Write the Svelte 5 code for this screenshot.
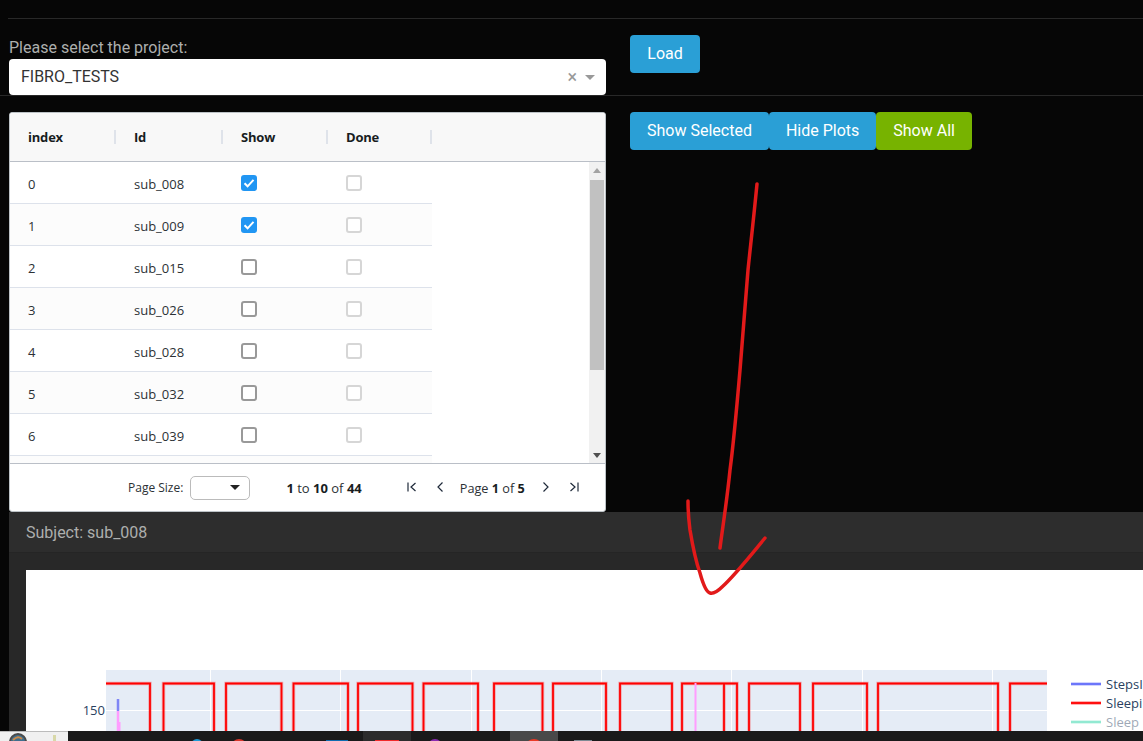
<script>
  const rows = [
    { i: 0, id: 'sub_008', show: true },
    { i: 1, id: 'sub_009', show: true },
    { i: 2, id: 'sub_015', show: false },
    { i: 3, id: 'sub_026', show: false },
    { i: 4, id: 'sub_028', show: false },
    { i: 5, id: 'sub_032', show: false },
    { i: 6, id: 'sub_039', show: false }
  ];
  const pulses = [[163.5,214],[226,281.5],[293.5,348],[358,412.5],[423.5,478],[494,542.5],[553,606],[620,672],[682,737],[749,800],[813,867],[878,998]];
  const trace = 'M106 683.5H150V741 ' + pulses.map(([a, b]) => `M${a} 741V683.5H${b}V741`).join(' ') + ' M1010 741V683.5H1047 M724 683.5V741';
  const grid = [210.5, 340.5, 471.5, 601.5, 731.5, 862.5, 992.5];
  const legend = [
    { y: 684, c: '#636efa', t: 'StepsI', o: 1 },
    { y: 703, c: '#ff0000', t: 'Sleepi', o: 1 },
    { y: 722, c: '#00cc96', t: 'Sleep', o: 0.45 }
  ];
</script>

<div class="page">
  <div class="rule-top"></div>
  <section class="load-row">
    <div class="col-left">
      <label class="label" for="project">Please select the project:</label>
      <div class="select" id="project">
        <span>FIBRO_TESTS</span>
        <span class="clear">×</span>
        <span class="caret"></span>
      </div>
    </div>
    <button class="btn load">Load</button>
  </section>

  <section class="table-row">
    <div class="card">
      <div class="thead">
        <div class="th">index</div>
        <div class="th">Id</div>
        <div class="th">Show</div>
        <div class="th">Done</div>
      </div>
      <div class="tbody">
        <div class="rows">
          {#each rows as r}
            <div class="tr" class:alt={r.i % 2 === 1}>
              <div class="td">{r.i}</div>
              <div class="td">{r.id}</div>
              <div class="td box">
                {#if r.show}
                  <span class="cb on">
                    <svg width="16" height="16" viewBox="0 0 16 16"><path d="M3.5 8.2 6.6 11.3 12.5 4.8" fill="none" stroke="#fff" stroke-width="2"/></svg>
                  </span>
                {:else}
                  <span class="cb"></span>
                {/if}
              </div>
              <div class="td box"><span class="cb off"></span></div>
            </div>
          {/each}
          <div class="tr alt"></div>
        </div>
        <div class="scrollbar">
          <span class="arrow up"></span>
          <div class="thumb"></div>
          <span class="arrow down"></span>
        </div>
      </div>
      <div class="tfoot">
        <span class="ps-label">Page Size:</span>
        <span class="ps"><span class="ps-caret"></span></span>
        <span class="count"><b>1</b> to <b>10</b> of <b>44</b></span>
        <svg class="pi first" width="10" height="10" viewBox="0 0 10 10"><path d="M1 .5V9.500M8.500 1 4 5 8.500 9" fill="none" stroke="#1f2a3a" stroke-width="1.200"/></svg>
        <svg class="pi prev" width="8" height="10" viewBox="0 0 8 10"><path d="M6.500 .5 2 5 6.500 9.500" fill="none" stroke="#1f2a3a" stroke-width="1.200"/></svg>
        <span class="pg">Page <b>1</b> of <b>5</b></span>
        <svg class="pi next" width="8" height="10" viewBox="0 0 8 10"><path d="M1.500 .5 6 5 1.500 9.500" fill="none" stroke="#1f2a3a" stroke-width="1.200"/></svg>
        <svg class="pi last" width="10" height="10" viewBox="0 0 10 10"><path d="M1.500 1 6 5 1.500 9M9 .5V9.500" fill="none" stroke="#1f2a3a" stroke-width="1.200"/></svg>
      </div>
    </div>
    <div class="actions">
      <button class="btn">Show Selected</button>
      <button class="btn">Hide Plots</button>
      <button class="btn green">Show All</button>
    </div>
  </section>

  <section class="panel">
    <div class="panel-head">Subject: sub_008</div>
    <div class="panel-body">
      <svg class="plot" viewBox="26 570 1117 171" width="1117" height="171">
        <rect x="106" y="670" width="941" height="71" fill="#e5ecf6" />
        {#each grid as x}
          <line x1={x} x2={x} y1="670" y2="741" stroke="#fff" />
        {/each}
        <line x1="106" x2="1047" y1="710.500" y2="710.500" stroke="#fff" />
        <path d={trace} fill="none" stroke="#ff0000" stroke-opacity=".28" stroke-width="3.500" />
        <path d={trace} fill="none" stroke="#ff0000" stroke-width="1.800" />
        <path d="M118 699V711" stroke="#7f86f5" stroke-width="2.500" />
        <path d="M118 711V741" stroke="#ff9dff" stroke-width="2.500" />
        <path d="M119.500 722V741" stroke="#ff9dff" stroke-width="2" />
        <path d="M695.500 683V741" stroke="#ff9dff" stroke-width="2" />
        <text class="tick" x="105" y="715" text-anchor="end">150</text>
        {#each legend as l}
          <g opacity={l.o}>
            <line x1="1071" x2="1101" y1={l.y} y2={l.y} stroke={l.c} stroke-opacity=".4" stroke-width="3.500" />
            <line x1="1071" x2="1101" y1={l.y} y2={l.y} stroke={l.c} stroke-width="1.800" />
            <text class="leg" x="1106" y={l.y + 5}>{l.t}</text>
          </g>
        {/each}
      </svg>
    </div>
  </section>

  <svg class="ink" width="1143" height="741" viewBox="0 0 1143 741">
    <path d="M757 184C753 225 750 250 748 270C745 305 743 335 740 370C737 405 734 440 730 470C727 500 723 525 720 548" />
    <path d="M688 501C688 515 689 522 690 530C693 548 696 562 700 573C703 584 706 592 710 593C714 594 718 591 722 587C736 574 750 556 765 538" />
  </svg>

  <footer class="taskbar">
    <div class="tab-chip">
      <svg width="20" height="10" viewBox="0 0 20 10"><circle cx="10" cy="10" r="8" fill="#3f6f8f" stroke="#4a4a4a" stroke-width="2"/><path d="M5 8Q10 3 14 7" fill="none" stroke="#c98a4a" stroke-width="2"/></svg>
      <span class="chip-tip"></span>
    </div>
    <div class="tb-slot s1"></div>
    <div class="tb-slot s2"></div>
    <div class="tb-slot s3"></div>
    <div class="tb-slot s4"></div>
    <div class="tb-slot s5"></div>
    <div class="tb-hl h1"></div>
    <div class="tb-hl h2"></div>
    <div class="tb-slot s6"></div>
    <div class="tb-slot s7"></div>
  </footer>
</div>

<style>
  :global(body) {
    margin: 0;
    background: #060606;
    overflow: hidden;
  }
  .page {
    position: relative;
    width: 1143px;
    height: 741px;
    overflow: hidden;
    background: #060606;
    font-family: Roboto, sans-serif;
    color: #adafae;
  }
  .rule-top {
    height: 1px;
    margin: 18px 0 0 8px;
    background: #282828;
  }
  .load-row {
    display: flex;
    align-items: flex-start;
    height: 76px;
    border-bottom: 1px solid #282828;
  }
  .col-left {
    width: 597px;
    margin-left: 9px;
    padding-top: 18px;
    position: relative;
  }
  .label {
    display: block;
    font-size: 16px;
    line-height: 22px;
    color: #adafae;
  }
  .select {
    display: flex;
    align-items: center;
    box-sizing: border-box;
    height: 36px;
    padding: 0 11px 1px 12px;
    background: #fff;
    border-radius: 4px;
    font-size: 16px;
    letter-spacing: -0.02px;
    color: #333;
    position: relative;
    z-index: 1;
  }
  .select span:first-child {
    flex: 1;
  }
  .clear {
    color: #999;
    font-size: 18px;
    line-height: 1;
    margin-right: 8px;
  }
  .caret {
    width: 0;
    height: 0;
    border-left: 5px solid transparent;
    border-right: 5px solid transparent;
    border-top: 5px solid #999;
    margin-top: 2px;
  }
  .btn {
    font-family: Roboto, sans-serif;
    font-size: 16px;
    line-height: 24px;
    color: #fff;
    background: #2a9fd6;
    border: 0;
    border-radius: 4px;
    padding: 7px 17px;
    height: 38px;
    white-space: nowrap;
  }
  .btn.green {
    background: #77b300;
  }
  .load {
    margin: 16px 0 0 24px;
    width: 70px;
    padding: 0;
  }
  .table-row {
    display: flex;
    align-items: flex-start;
    margin-top: 16px;
  }
  .card {
    box-sizing: border-box;
    width: 597px;
    height: 400px;
    margin-left: 9px;
    background: #fff;
    border: 1px solid #bdc3c7;
    border-radius: 3px;
    display: flex;
    flex-direction: column;
    font-family: "Open Sans", sans-serif;
    font-size: 13px;
    color: #181d1f;
    overflow: hidden;
  }
  .thead {
    display: grid;
    grid-template-columns: 106px 107px 105px 104px;
    height: 48px;
    flex: none;
    background: #f8f8f8;
    border-bottom: 1px solid #babfc7;
  }
  .th {
    display: flex;
    align-items: center;
    padding-left: 18px;
    font-weight: 700;
    letter-spacing: -0.2px;
    position: relative;
  }
  .th::after {
    content: "";
    position: absolute;
    right: 0;
    top: 17px;
    height: 14px;
    width: 2px;
    background: #dfe3ea;
  }
  .tbody {
    flex: 1;
    min-height: 0;
    display: flex;
    overflow: hidden;
    position: relative;
  }
  .rows {
    width: 422px;
    height: 302px;
    overflow: hidden;
  }
  .tr {
    display: grid;
    grid-template-columns: 106px 107px 105px 104px;
    height: 41px;
    border-bottom: 1px solid #dde2eb;
    background: #fff;
  }
  .tr.alt {
    background: #fcfcfc;
  }
  .td {
    display: flex;
    align-items: center;
    padding-left: 18px;
    padding-top: 3px;
    color: #2c3135;
  }
  .td.box {
    padding-top: 0;
    margin-top: 0;
  }
  .cb {
    box-sizing: border-box;
    width: 16px;
    height: 16px;
    border: 2px solid #999;
    border-radius: 3px;
    background: #fff;
    display: block;
  }
  .cb.on {
    border: 0;
    background: #2196f3;
  }
  .cb.off {
    border-color: #d6d6d6;
  }
  .scrollbar {
    margin-left: auto;
    width: 16px;
    height: 302px;
    background: #f1f1f1;
    position: relative;
  }
  .thumb {
    position: absolute;
    top: 18px;
    left: 1px;
    width: 14px;
    height: 190px;
    background: #c1c1c1;
  }
  .arrow {
    position: absolute;
    left: 4px;
    width: 0;
    height: 0;
    border-left: 4px solid transparent;
    border-right: 4px solid transparent;
  }
  .arrow.up {
    top: 6px;
    border-bottom: 5px solid #a3a3a3;
  }
  .arrow.down {
    bottom: 6px;
    border-top: 5px solid #505050;
  }
  .tfoot {
    flex: none;
    height: 47px;
    border-top: 1px solid #babfc7;
    display: flex;
    align-items: center;
    font-size: 12px;
    color: #2c3135;
    padding-left: 118px;
  }
  .tfoot b {
    font-weight: 700;
    color: #181d1f;
  }
  .ps-label {
    margin-right: 7px;
  }
  .ps {
    box-sizing: border-box;
    display: block;
    position: relative;
    width: 60px;
    height: 24px;
    border: 1px solid #bbb;
    border-radius: 5px;
    background: #fff;
  }
  .ps-caret {
    position: absolute;
    top: 8px;
    right: 9px;
    width: 0;
    height: 0;
    border-left: 5px solid transparent;
    border-right: 5px solid transparent;
    border-top: 5px solid #222;
  }
  .count {
    margin-left: 36px;
    font-size: 13px;
    white-space: nowrap;
  }
  .pi {
    display: block;
    flex: none;
    margin-top: -2px;
  }
  .first {
    margin-left: 45px;
  }
  .prev {
    margin-left: 19px;
  }
  .pg {
    margin-left: 16px;
    font-size: 12.700px;
    white-space: nowrap;
  }
  .next {
    margin-left: 17px;
  }
  .last {
    margin-left: 19px;
  }
  .actions {
    display: flex;
    margin-left: 24px;
  }
  .panel {
    margin: 0 0 0 9px;
    background: #282828;
    height: 229px;
    overflow: hidden;
  }
  .panel-head {
    box-sizing: border-box;
    height: 41px;
    padding: 0 17px;
    background: #2d2d2d;
    border-bottom: 1px solid #252525;
    display: flex;
    align-items: center;
    font-size: 16px;
    color: #adafae;
  }
  .panel-body {
    padding: 17px 0 0 17px;
  }
  .plot {
    display: block;
    background: #fff;
  }
  .tick {
    font-family: "Open Sans", sans-serif;
    font-size: 13px;
    fill: #2a3f5f;
  }
  .leg {
    font-family: "Open Sans", sans-serif;
    font-size: 13px;
    fill: #2a3f5f;
  }
  .ink {
    position: absolute;
    inset: 0;
    pointer-events: none;
  }
  .ink path {
    fill: none;
    stroke: #e21a1a;
    stroke-width: 3.500;
    stroke-linecap: round;
    stroke-linejoin: round;
  }
  .taskbar {
    position: absolute;
    left: 0;
    right: 0;
    bottom: 0;
    height: 10px;
    background: #1a1a1a;
    overflow: hidden;
  }
  .tab-chip {
    position: absolute;
    left: 0;
    top: 0;
    box-sizing: border-box;
    width: 68px;
    height: 10px;
    background: #f0f0f0;
    border-top: 1px solid #bbb;
    padding-left: 8px;
  }
  .tab-chip svg {
    display: block;
  }
  .chip-tip {
    position: absolute;
    left: 53px;
    top: 3px;
    width: 3px;
    height: 7px;
    background: #d8d8a8;
  }
  .tb-hl {
    position: absolute;
    top: 0;
    height: 10px;
  }
  .h1 {
    left: 363px;
    width: 48px;
    background: #2c2c2c;
  }
  .h2 {
    left: 510px;
    width: 48px;
    background: #494949;
  }
  .tb-slot {
    position: absolute;
    z-index: 1;
  }
  .s1 {
    left: 191px;
    top: 8px;
    width: 12px;
    height: 12px;
    border-radius: 50%;
    background: #1f9ad6;
  }
  .s2 {
    left: 231px;
    top: 8px;
    width: 16px;
    height: 16px;
    border-radius: 50%;
    background: #d9362b;
  }
  .s3 {
    left: 326px;
    top: 9px;
    width: 22px;
    height: 6px;
    background: #0f6cb0;
  }
  .s4 {
    left: 375px;
    top: 9px;
    width: 24px;
    height: 6px;
    background: #f02a2a;
  }
  .s5 {
    left: 428px;
    top: 8px;
    width: 14px;
    height: 14px;
    border-radius: 50%;
    background: #8a2bb0;
  }
  .s6 {
    left: 525px;
    top: 8px;
    width: 18px;
    height: 18px;
    border-radius: 50%;
    background: #ea3a26;
  }
  .s7 {
    left: 574px;
    top: 9px;
    width: 18px;
    height: 6px;
    background: #7d8a94;
  }
</style>
